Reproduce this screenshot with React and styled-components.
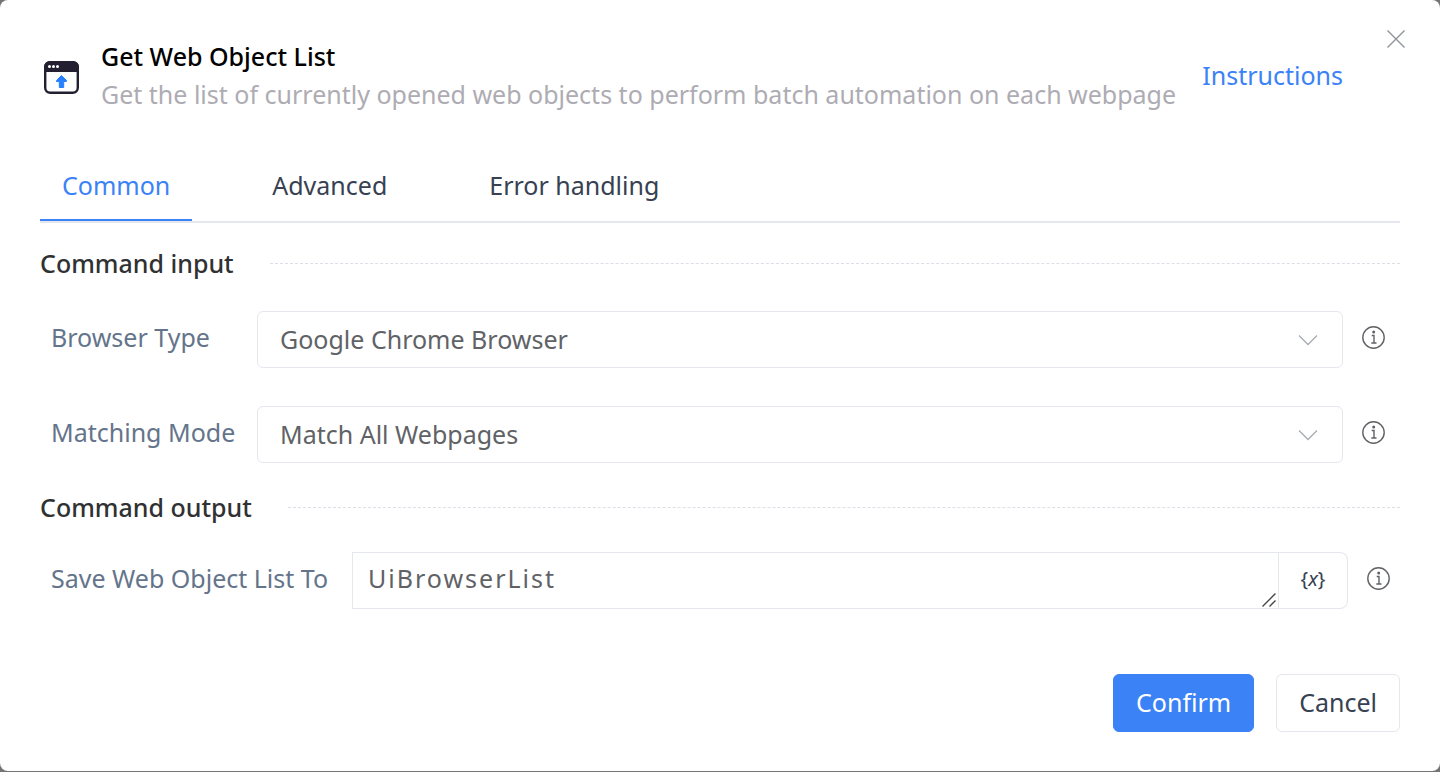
import React from "react";
import styled, { createGlobalStyle } from "styled-components";

const GlobalStyle = createGlobalStyle`
  *, *::before, *::after { box-sizing: border-box; }
  body {
    margin: 0;
    background: #747474;
    font-family: "Noto Sans", "Open Sans", sans-serif;
    font-size: 25px;
    line-height: 38px;
  }
  button, select, textarea { font: inherit; }
  h1, h2, p { margin: 0; font-size: inherit; }
`;

const Dialog = styled.main`
  position: relative;
  display: flex;
  flex-direction: column;
  min-height: calc(100vh - 1px);
  padding: 37px 40px 39px;
  border-radius: 8px;
  background: #fff;
`;

const CloseButton = styled.button`
  position: absolute;
  top: 23px;
  right: 28px;
  display: grid;
  place-items: center;
  width: 32px;
  height: 32px;
  padding: 0;
  border: 0;
  background: none;
  color: #909399;
  cursor: pointer;
`;

const Header = styled.header`
  display: flex;
  align-items: center;
  padding-right: 57px;
`;

const HeaderIcon = styled.svg`
  flex: none;
  width: 35px;
  height: 33px;
  margin: 4px 22px 0 4px;
`;

const Heading = styled.div`
  flex: 1;
`;

const Title = styled.h1`
  color: #000;
  font-weight: 500;
`;

const Description = styled.p`
  color: #aeacb3;
  white-space: nowrap;
`;

const HelpLink = styled.a`
  margin-left: 8px;
  color: #3b82f6;
  text-decoration: none;
`;

const Tabs = styled.nav`
  display: flex;
  gap: 58px;
  margin-top: 38px;
  border-bottom: 2px solid #e4e7ed;
`;

const Tab = styled.button`
  height: 70px;
  padding: 0 22px;
  border: 0;
  border-bottom: 2px solid ${(p) => (p.$active ? "#3b82f6" : "transparent")};
  background: none;
  color: ${(p) => (p.$active ? "#3b82f6" : "#374151")};
  cursor: pointer;
`;

const SectionTitle = styled.h2`
  display: flex;
  align-items: center;
  gap: 36px;
  margin: ${(p) => p.$top}px 0 ${(p) => p.$bottom}px;
  color: #303133;
  font-weight: 500;

  &::after {
    content: "";
    flex: 1;
    border-top: 1px dashed #dcdfe6;
  }
`;

const Field = styled.div`
  display: flex;
  align-items: flex-start;
  padding-left: 11px;
  & + & { margin-top: 38px; }
`;

const Label = styled.label`
  flex: none;
  width: ${(p) => p.$width}px;
  margin-top: 7px;
  color: #64748b;
  white-space: nowrap;
`;

const SelectBox = styled.div`
  position: relative;
  flex: 1;
  color: #a8abb2;

  svg {
    position: absolute;
    top: 19px;
    right: 25px;
    pointer-events: none;
  }
`;

const Select = styled.select`
  display: block;
  width: 100%;
  height: 57px;
  padding: 0 60px 2px 22px;
  border: 1px solid #e4e7ed;
  border-radius: 6px;
  appearance: none;
  background: #fff;
  color: #606266;
`;

const InfoButton = styled.button`
  display: grid;
  place-items: center;
  width: 24px;
  height: 24px;
  margin: 15px ${(p) => p.$right}px 0 19px;
  padding: 0;
  border: 0;
  background: none;
  color: #606266;
`;

const OutputBox = styled.div`
  position: relative;
  display: flex;
  flex: 1;
`;

const Output = styled.textarea`
  flex: 1;
  min-width: 0;
  height: 57px;
  padding: 6px 15px;
  border: 1px solid #e4e7ed;
  color: #606266;
  letter-spacing: 2px;
  resize: none;
  overflow: hidden;
`;

const Grip = styled.svg`
  position: absolute;
  right: 72px;
  bottom: 2px;
  pointer-events: none;
`;

const VariableButton = styled.button`
  width: 69px;
  padding: 0 0 4px;
  border: 1px solid #e4e7ed;
  border-left: 0;
  border-radius: 0 8px 8px 0;
  background: #fff;
  color: #374151;
  font-size: 20px;
  line-height: 24px;
`;

const Footer = styled.footer`
  display: flex;
  justify-content: flex-end;
  gap: 22px;
  margin-top: auto;
  padding-top: 38px;
`;

const ActionButton = styled.button`
  height: 58px;
  padding: 0 22px 2px;
  border: 1px solid ${(p) => (p.$primary ? "#3b82f6" : "#e4e7ed")};
  border-radius: 6px;
  background: ${(p) => (p.$primary ? "#3b82f6" : "#fff")};
  color: ${(p) => (p.$primary ? "#fff" : "#374151")};
`;

const Chevron = () => (
  <svg width="20" height="20" viewBox="0 0 20 20" fill="none" stroke="currentColor" strokeWidth="1.3">
    <path d="M1 5.500l9 9L19 5.500" />
  </svg>
);

const Info = ({ right = 14 }) => (
  <InfoButton type="button" aria-label="More information" $right={right}>
    <svg width="24" height="24" viewBox="0 0 24 24" fill="none" stroke="currentColor" strokeWidth="1.4">
      <circle cx="11.5" cy="11.5" r="10.7" />
      <path d="M9.700 9.500h2.300v7.500M9.300 17h5.200" />
      <circle cx="11.700" cy="5.900" r="1.500" fill="currentColor" stroke="none" />
    </svg>
  </InfoButton>
);

const SelectField = ({ id, label, value }) => (
  <Field>
    <Label htmlFor={id} $width={206}>{label}</Label>
    <SelectBox>
      <Select id={id} defaultValue={value}>
        <option>{value}</option>
      </Select>
      <Chevron />
    </SelectBox>
    <Info />
  </Field>
);

export default function App() {
  return (
    <>
      <GlobalStyle />
      <Dialog>
        <CloseButton type="button" aria-label="Close">
          <svg width="18" height="18" viewBox="0 0 18 18" stroke="currentColor" strokeWidth="1.4">
            <path d="M.5.5l17 17M17.5.5l-17 17" />
          </svg>
        </CloseButton>
        <Header>
          <HeaderIcon viewBox="0 0 35 33">
            <rect x="1.200" y="1.200" width="32.600" height="30.600" rx="5" fill="#fff" stroke="#231f30" strokeWidth="2.400" />
            <path d="M0 11V6a6 6 0 0 1 6-6h23a6 6 0 0 1 6 6v5z" fill="#231f30" />
            <g fill="#fff">
              <circle cx="5.5" cy="5.5" r="1.5" />
              <circle cx="9.5" cy="5.5" r="1.5" />
              <circle cx="13.5" cy="5.5" r="1.5" />
            </g>
            <path d="M17.500 14.500l5 5v1H19.700v6h-4.400v-6h-2.800v-1z" fill="#2680ff" stroke="#2680ff" strokeLinejoin="round" />
          </HeaderIcon>
          <Heading>
            <Title>Get Web Object List</Title>
            <Description>Get the list of currently opened web objects to perform batch automation on each webpage</Description>
          </Heading>
          <HelpLink href="#instructions">Instructions</HelpLink>
        </Header>
        <Tabs>
          <Tab type="button" $active>Common</Tab>
          <Tab type="button">Advanced</Tab>
          <Tab type="button">Error handling</Tab>
        </Tabs>
        <SectionTitle $top={21} $bottom={29}>Command input</SectionTitle>
        <SelectField id="browser-type" label="Browser Type" value="Google Chrome Browser" />
        <SelectField id="matching-mode" label="Matching Mode" value="Match All Webpages" />
        <SectionTitle $top={25} $bottom={26}>Command output</SectionTitle>
        <Field>
          <Label htmlFor="save-to" $width={301}>Save Web Object List To</Label>
          <OutputBox>
            <Output id="save-to" rows={1} defaultValue="UiBrowserList" spellCheck={false} />
            <Grip width="14" height="14" viewBox="0 0 14 14" stroke="#444" strokeWidth="1.4">
              <path d="M.5 13.500l13-13M7.500 13.500l6-6" />
            </Grip>
            <VariableButton type="button" aria-label="Insert variable">{"{"}<i>x</i>{"}"}</VariableButton>
          </OutputBox>
          <Info right={9} />
        </Field>
        <Footer>
          <ActionButton type="button" $primary>Confirm</ActionButton>
          <ActionButton type="button">Cancel</ActionButton>
        </Footer>
      </Dialog>
    </>
  );
}
